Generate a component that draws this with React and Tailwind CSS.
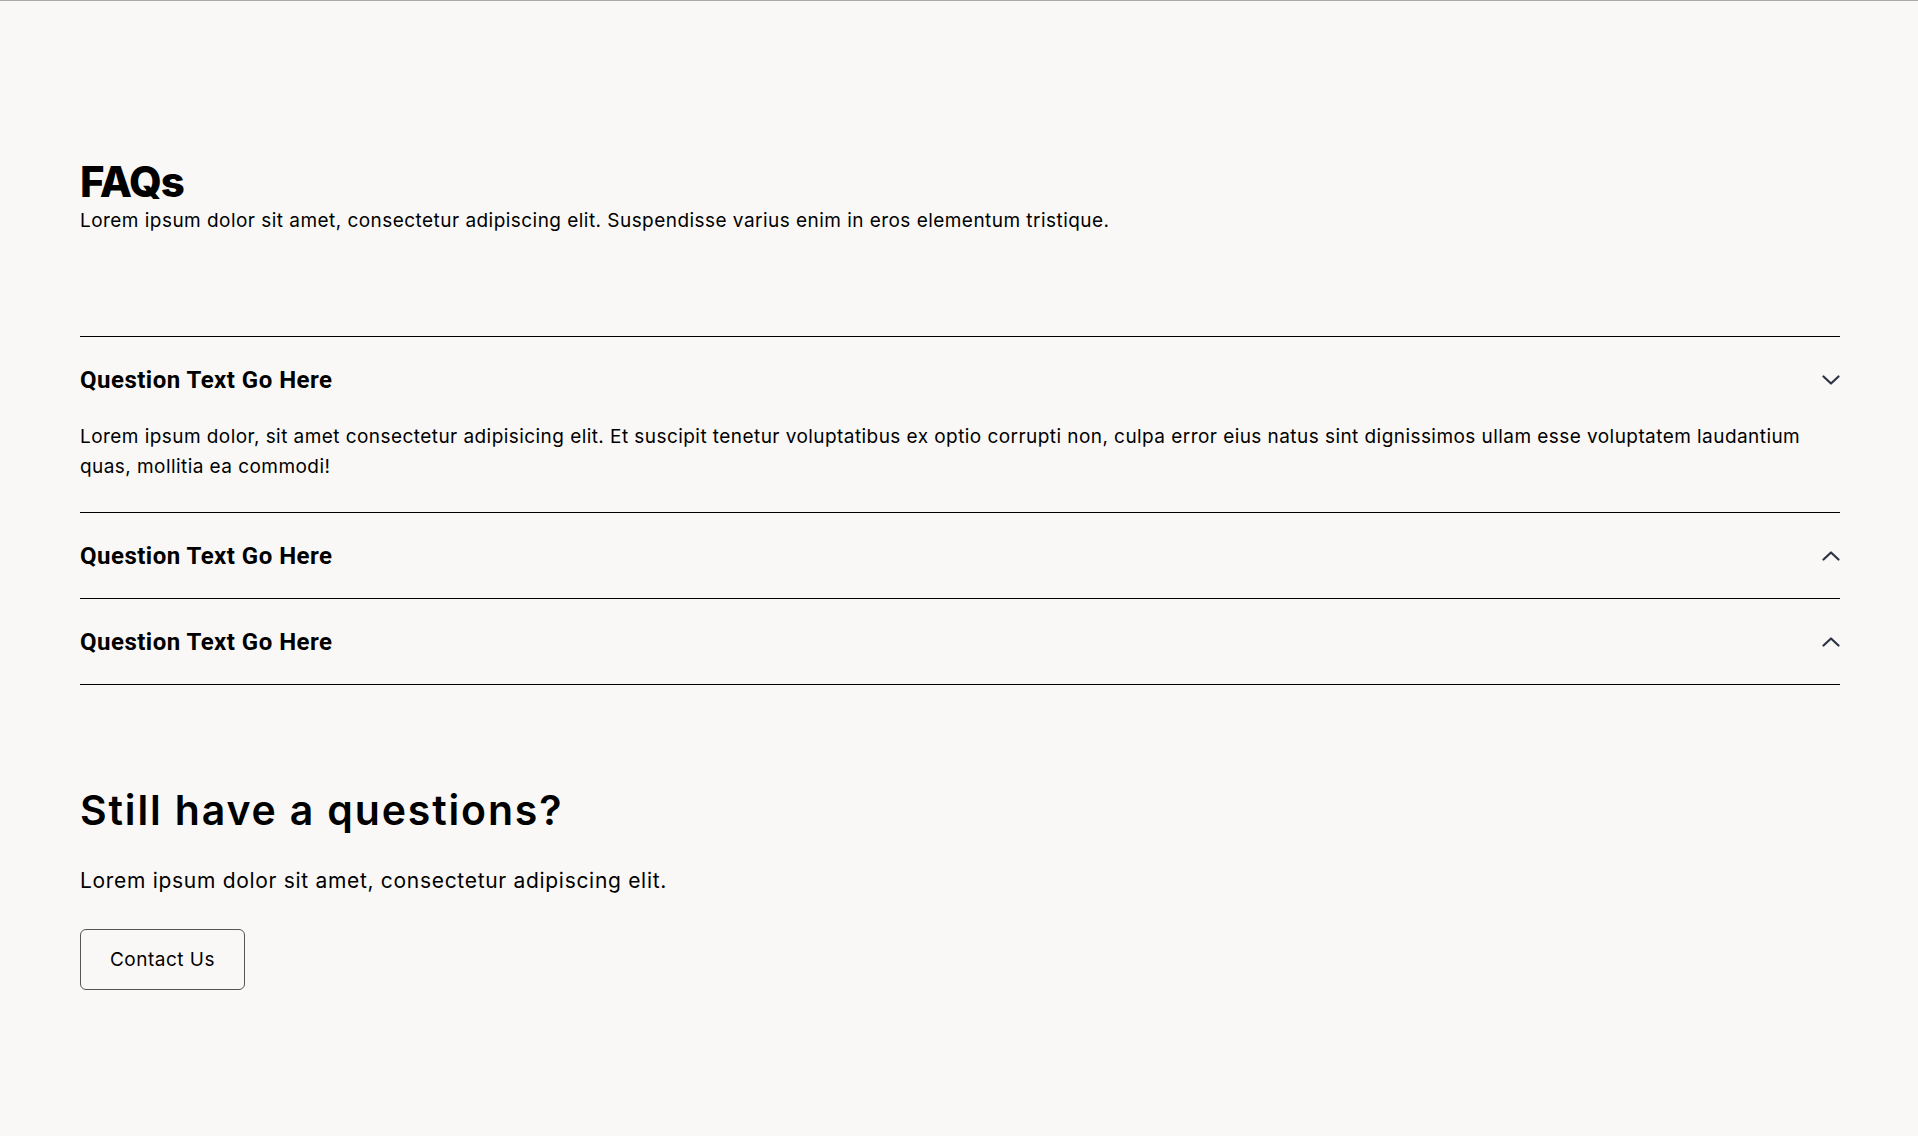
import React, { useState } from "react";

const faqs = [
  {
    q: "Question Text Go Here",
    a: "Lorem ipsum dolor, sit amet consectetur adipisicing elit. Et suscipit tenetur voluptatibus ex optio corrupti non, culpa error eius natus sint dignissimos ullam esse voluptatem laudantium quas, mollitia ea commodi!",
  },
  {
    q: "Question Text Go Here",
    a: "Lorem ipsum dolor, sit amet consectetur adipisicing elit. Et suscipit tenetur voluptatibus ex optio corrupti non.",
  },
  {
    q: "Question Text Go Here",
    a: "Lorem ipsum dolor, sit amet consectetur adipisicing elit. Et suscipit tenetur voluptatibus ex optio corrupti non.",
  },
];

const Chevron = ({ open }) => (
  <svg
    width="18"
    height="10"
    viewBox="0 0 18 10"
    fill="none"
    className={open ? "" : "rotate-180"}
  >
    <path d="M1.5 1.5l7.5 7 7.5-7" stroke="#2d3342" strokeWidth="2.2" strokeLinecap="round" strokeLinejoin="round" />
  </svg>
);

const FaqItem = ({ item, open, onToggle }) => (
  <div className="border-b border-black">
    <button
      onClick={onToggle}
      className="w-full h-[85px] flex items-center justify-between text-left cursor-pointer"
    >
      <span className="font-['Roboto',sans-serif] text-[24px] font-bold text-black leading-[36px] tracking-[0.02em]">
        {item.q}
      </span>
      <Chevron open={open} />
    </button>
    {open && (
      <p className="pb-[30px] text-[19px] leading-[30px] tracking-[0.023em] text-black">{item.a}</p>
    )}
  </div>
);

export default function App() {
  const [openIdx, setOpenIdx] = useState(0);

  return (
    <div className="min-h-screen bg-[#f9f8f6] border-t border-[#aaaaaa] font-['Inter',sans-serif] text-black">
      <section className="pl-20 pr-[78px] pt-[155px] pb-[140px]">
        {/* Header */}
        <div>
          <h1 className="text-[42px] leading-[51px] font-extrabold tracking-tight">FAQs</h1>
          <p className="text-[19px] leading-[27px] tracking-[0.024em]">
            Lorem ipsum dolor sit amet, consectetur adipiscing elit. Suspendisse varius enim in eros elementum tristique.
          </p>
        </div>

        {/* Accordion */}
        <div className="mt-[102px] border-t border-black">
          {faqs.map((item, i) => (
            <FaqItem
              key={i}
              item={item}
              open={openIdx === i}
              onToggle={() => setOpenIdx(openIdx === i ? -1 : i)}
            />
          ))}
        </div>

        {/* Contact */}
        <div className="mt-[101px]">
          <h2 className="text-[41px] leading-[48px] font-semibold tracking-[0.045em]">Still have a questions?</h2>
          <p className="mt-8 text-[21px] leading-[30px] tracking-[0.033em]">
            Lorem ipsum dolor sit amet, consectetur adipiscing elit.
          </p>
          <button className="mt-[33px] px-[29px] py-[16px] text-[19px] leading-[27px] tracking-[0.026em] border border-[#555555] rounded-[6px] cursor-pointer">
            Contact Us
          </button>
        </div>
      </section>
    </div>
  );
}
